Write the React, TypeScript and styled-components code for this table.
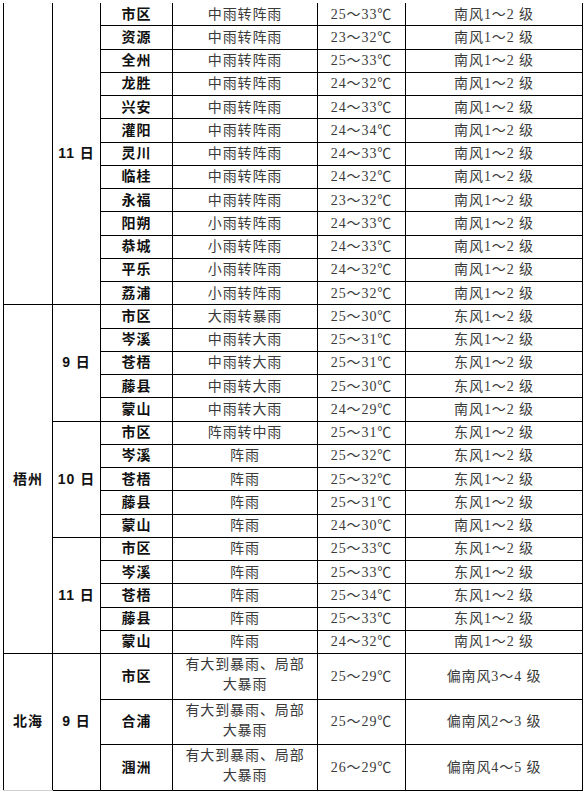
import { FunctionComponent } from "react";
import styled, { createGlobalStyle } from "styled-components";

type Row = {
  area: string;
  weather: string[];
  temp: string;
  wind: string;
};

type DayBlock = {
  day: string;
  rows: Row[];
};

type CityBlock = {
  city: string;
  tall?: boolean;
  days: DayBlock[];
};

const r = (area: string, weather: string, temp: string, wind: string): Row => ({
  area,
  weather: weather.split("|"),
  temp,
  wind,
});

const S = "南风1～2 级";
const E = "东风1～2 级";

const data: CityBlock[] = [
  {
    city: "",
    days: [
      {
        day: "11 日",
        rows: [
          r("市区", "中雨转阵雨", "25～33℃", S),
          r("资源", "中雨转阵雨", "23～32℃", S),
          r("全州", "中雨转阵雨", "25～33℃", S),
          r("龙胜", "中雨转阵雨", "24～32℃", S),
          r("兴安", "中雨转阵雨", "24～33℃", S),
          r("灌阳", "中雨转阵雨", "24～34℃", S),
          r("灵川", "中雨转阵雨", "24～33℃", S),
          r("临桂", "中雨转阵雨", "24～32℃", S),
          r("永福", "中雨转阵雨", "23～32℃", S),
          r("阳朔", "小雨转阵雨", "24～33℃", S),
          r("恭城", "小雨转阵雨", "24～33℃", S),
          r("平乐", "小雨转阵雨", "24～32℃", S),
          r("荔浦", "小雨转阵雨", "25～32℃", S),
        ],
      },
    ],
  },
  {
    city: "梧州",
    days: [
      {
        day: "9 日",
        rows: [
          r("市区", "大雨转暴雨", "25～30℃", E),
          r("岑溪", "中雨转大雨", "25～31℃", E),
          r("苍梧", "中雨转大雨", "25～31℃", E),
          r("藤县", "中雨转大雨", "25～30℃", E),
          r("蒙山", "中雨转大雨", "24～29℃", S),
        ],
      },
      {
        day: "10 日",
        rows: [
          r("市区", "阵雨转中雨", "25～31℃", E),
          r("岑溪", "阵雨", "25～32℃", E),
          r("苍梧", "阵雨", "25～32℃", E),
          r("藤县", "阵雨", "25～31℃", E),
          r("蒙山", "阵雨", "24～30℃", S),
        ],
      },
      {
        day: "11 日",
        rows: [
          r("市区", "阵雨", "25～33℃", E),
          r("岑溪", "阵雨", "25～33℃", E),
          r("苍梧", "阵雨", "25～34℃", E),
          r("藤县", "阵雨", "25～33℃", E),
          r("蒙山", "阵雨", "24～32℃", S),
        ],
      },
    ],
  },
  {
    city: "北海",
    tall: true,
    days: [
      {
        day: "9 日",
        rows: [
          r("市区", "有大到暴雨、局部|大暴雨", "25～29℃", "偏南风3～4 级"),
          r("合浦", "有大到暴雨、局部|大暴雨", "25～29℃", "偏南风2～3 级"),
          r("涠洲", "有大到暴雨、局部|大暴雨", "26～29℃", "偏南风4～5 级"),
        ],
      },
    ],
  },
];

const columnWidths = [49, 48, 72, 145, 88, 177];

const GlobalStyle = createGlobalStyle`
  html, body {
    margin: 0;
    padding: 0;
    background: #ffffff;
  }
  body {
    font-family: "Liberation Serif", "Noto Sans CJK SC", serif;
    color: #111;
  }
`;

const Page = styled.div`
  width: 586px;
  height: 794px;
  box-sizing: border-box;
  padding: 3px 0 0 3px;
  overflow: hidden;
`;

const Table = styled.table`
  width: 579px;
  border-collapse: collapse;
  table-layout: fixed;
`;

const Col = styled.col<{ $w: number }>`
  width: ${({ $w }) => $w}px;
`;

const Cell = styled.td<{ $bold?: boolean; $tall?: boolean; $first?: boolean; $muted?: boolean }>`
  border: 1px solid #000;
  border-top: ${({ $first }) => ($first ? "none" : "1px solid #000")};
  height: ${({ $tall }) => ($tall ? "44.6px" : "22.25px")};
  padding: 0;
  text-align: center;
  vertical-align: middle;
  font-size: 14px;
  line-height: 19px;
  white-space: nowrap;
  font-family: ${({ $bold }) =>
    $bold
      ? `"Liberation Sans", "Noto Sans CJK SC", sans-serif`
      : `"Liberation Serif", "Noto Sans CJK SC", serif`};
  font-weight: ${({ $bold }) => ($bold ? 700 : 400)};
  color: ${({ $muted }) => ($muted ? "#3a3a3a" : "#111")};
  letter-spacing: ${({ $bold }) => ($bold ? "1px" : "0.9px")};
`;

const SpanCell = styled(Cell)<{ $openBottom?: boolean }>`
  border-bottom-color: ${({ $openBottom }) => ($openBottom ? "#d0d0d0" : "#000")};
`;

const WeatherLines = styled.div`
  display: flex;
  flex-direction: column;
  align-items: center;
  line-height: 20px;
  padding-bottom: 2px;
`;

const App: FunctionComponent = () => {
  let first = true;
  const rows: JSX.Element[] = [];

  data.forEach((city, ci) => {
    const cityCount = city.days.reduce((n, d) => n + d.rows.length, 0);
    city.days.forEach((day, di) => {
      day.rows.forEach((row, ri) => {
        const isFirst = first;
        first = false;
        rows.push(
          <tr key={`${ci}-${di}-${ri}`}>
            {di === 0 && ri === 0 && (
              <SpanCell
                rowSpan={cityCount}
                $bold
                $first={isFirst}
                $openBottom={ci === data.length - 1}
              >
                {city.city}
              </SpanCell>
            )}
            {ri === 0 && (
              <Cell rowSpan={day.rows.length} $bold $first={isFirst}>
                {day.day}
              </Cell>
            )}
            <Cell $bold $tall={city.tall} $first={isFirst}>
              {row.area}
            </Cell>
            <Cell $tall={city.tall} $first={isFirst} $muted>
              {row.weather.length > 1 ? (
                <WeatherLines>
                  {row.weather.map((w) => (
                    <span key={w}>{w}</span>
                  ))}
                </WeatherLines>
              ) : (
                row.weather[0]
              )}
            </Cell>
            <Cell $tall={city.tall} $first={isFirst} $muted>
              {row.temp}
            </Cell>
            <Cell $tall={city.tall} $first={isFirst} $muted>
              {row.wind}
            </Cell>
          </tr>
        );
      });
    });
  });

  return (
    <Page>
      <GlobalStyle />
      <Table>
        <colgroup>
          {columnWidths.map((w, i) => (
            <Col key={i} $w={w} />
          ))}
        </colgroup>
        <tbody>{rows}</tbody>
      </Table>
    </Page>
  );
};

export default App;
